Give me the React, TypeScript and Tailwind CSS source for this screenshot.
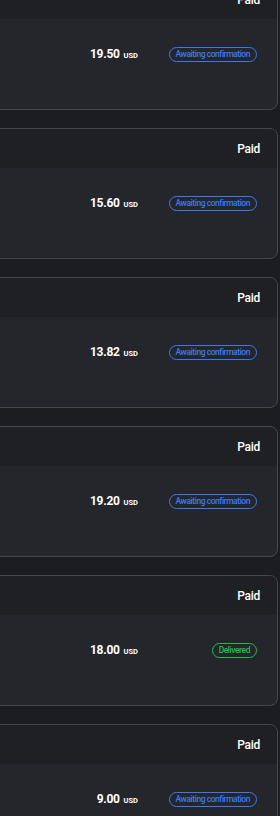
import React from 'react';

type Order = {
  amount: string;
  status: 'awaiting' | 'delivered';
};

const orders: Order[] = [
  { amount: '19.50', status: 'awaiting' },
  { amount: '15.60', status: 'awaiting' },
  { amount: '13.82', status: 'awaiting' },
  { amount: '19.20', status: 'awaiting' },
  { amount: '18.00', status: 'delivered' },
  { amount: '9.00', status: 'awaiting' },
];

const StatusBadge: React.FC<{ status: Order['status'] }> = ({ status }) => {
  if (status === 'delivered') {
    return (
      <span className="flex h-[15px] items-center rounded-full border border-[#1fbf4a] px-[6px] text-[8.5px] font-medium leading-none tracking-[-0.45px] text-[#1fbf4a]">
        Delivered
      </span>
    );
  }
  return (
    <span className="flex h-[15px] items-center rounded-full border border-[#3a7af0] px-[6px] text-[8.5px] font-medium leading-none tracking-[-0.45px] text-[#3a7af0]">
      Awaiting confirmation
    </span>
  );
};

const OrderCard: React.FC<{ order: Order }> = ({ order }) => (
  <div className="ml-[-20px] mr-[2px] overflow-hidden rounded-lg border border-[#46474c] bg-[#25262b]">
    {/* header */}
    <div className="flex h-[39px] items-center justify-end bg-[#1f2023] pr-[17px] text-[12px] font-medium tracking-[-0.3px] text-white">
      Paid
    </div>
    {/* body */}
    <div className="h-[90px] pt-[27px]">
      <div className="flex h-[16px] items-center justify-end pr-[20px]">
        <div className="flex items-baseline gap-[4px] text-white">
          <span className="text-[12px] font-bold tracking-[-0.3px]">{order.amount}</span>
          <span className="text-[7.5px] font-bold">USD</span>
        </div>
        <div className="flex w-[119px] justify-end">
          <StatusBadge status={order.status} />
        </div>
      </div>
    </div>
  </div>
);

export default function App() {
  return (
    <div
      className="min-h-[816px] w-[280px] overflow-hidden bg-[#1c1d20]"
      style={{ fontFamily: 'Roboto, "Liberation Sans", sans-serif' }}
    >
      <div className="mt-[-21px] flex flex-col gap-[18px]">
        {orders.map((o, i) => (
          <OrderCard key={i} order={o} />
        ))}
      </div>
    </div>
  );
}
